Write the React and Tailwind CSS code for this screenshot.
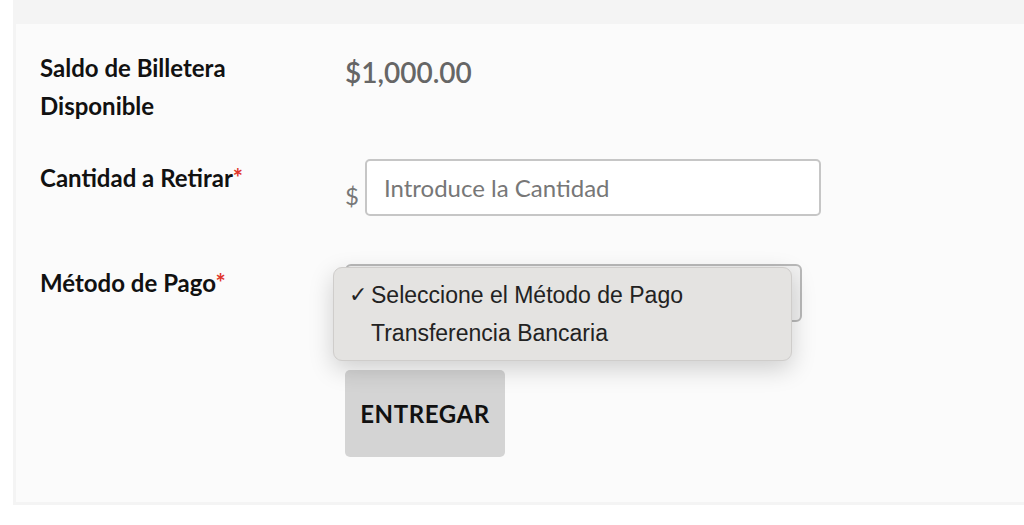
export default function App() {
  return (
    <div className="min-h-[525px] bg-white font-['Lato',sans-serif]">
      <div className="ml-[13px] bg-[#f4f4f4] pt-6 pl-[3px] pb-[3px]">
        <div className="h-[478px] bg-[#fbfbfb] pl-6 pt-[25px]">
          <div className="grid grid-cols-[305px_1fr] text-[24px] leading-[38px]">
            <div className="font-bold text-[#111]">
              Saldo de Billetera
              <br />
              Disponible
            </div>
            <div className="mt-1 text-[28px] font-semibold text-[#666]">$1,000.00</div>

            <div className="mt-[34px] font-bold text-[#111]">
              Cantidad a Retirar<span className="text-[#e0352b]">*</span>
            </div>
            <div className="mt-[34px] flex items-end gap-[6px]">
              <span className="pb-[1px] text-[24px] text-[#777]">$</span>
              <input
                type="text"
                placeholder="Introduce la Cantidad"
                className="h-[57px] w-[456px] rounded-[5px] border-2 border-[#c6c6c6] bg-white px-[17px] text-[24px] text-[#333] outline-none placeholder:text-[#777]"
              />
            </div>

            <div className="mt-[48px] font-bold text-[#111]">
              Método de Pago<span className="text-[#e0352b]">*</span>
            </div>
            <div className="relative mt-[48px]">
              <div className="h-[58px] w-[457px] rounded-[6px] border-2 border-[#b9b9b9] bg-[#f1f1f1]"></div>
              <div className="absolute left-[-12px] top-[3px] w-[459px] rounded-[9px] border border-[#cfcdcb] bg-[#e4e3e1] py-[8px] font-['Liberation_Sans',sans-serif] text-[23px] leading-[38px] text-[#222] shadow-[0_8px_24px_rgba(0,0,0,0.18)]">
                <div className="flex items-center">
                  <span className="w-[37px] pl-[15px] font-['DejaVu_Sans',sans-serif] text-[22px] font-bold">✓</span>
                  <span>Seleccione el Método de Pago</span>
                </div>
                <div className="flex items-center">
                  <span className="w-[37px]"></span>
                  <span>Transferencia Bancaria</span>
                </div>
              </div>
            </div>

            <div></div>
            <div className="mt-[48px]">
              <button className="h-[87px] w-[160px] rounded-[5px] bg-[#d4d4d4] text-[24px] font-bold tracking-[0.6px] text-[#111]">
                ENTREGAR
              </button>
            </div>
          </div>
        </div>
      </div>
    </div>
  );
}
